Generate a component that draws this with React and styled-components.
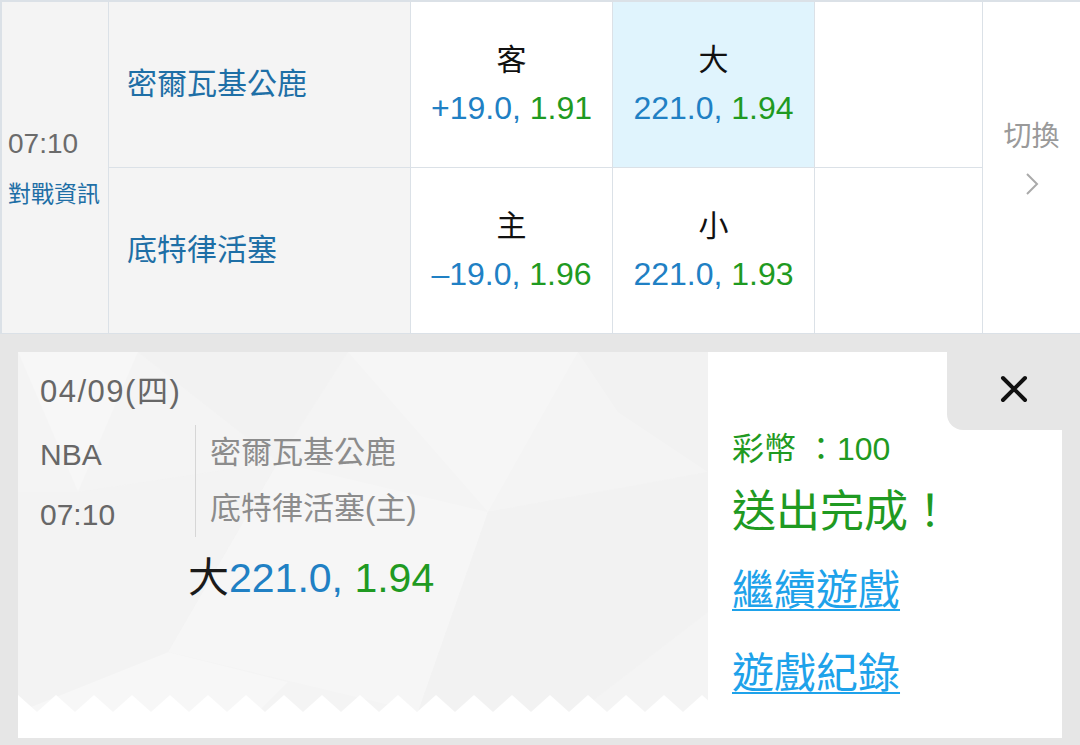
import React from 'react';
import styled, { createGlobalStyle } from 'styled-components';

const GlobalStyle = createGlobalStyle`
  html, body {
    margin: 0;
    padding: 0;
    background: #e6e6e6;
  }
  body {
    font-family: "Liberation Sans", "Noto Sans CJK TC", sans-serif;
    -webkit-font-smoothing: antialiased;
  }
`;

const BLUE = '#2080c4';
const GREEN = '#1f9a22';

const games = [
  { team: '密爾瓦基公鹿', side: '客', spread: '+19.0', spreadOdds: '1.91', ou: '大', total: '221.0', ouOdds: '1.94', picked: true },
  { team: '底特律活塞', side: '主', spread: '–19.0', spreadOdds: '1.96', ou: '小', total: '221.0', ouOdds: '1.93', picked: false },
];

const App = () => {
  return (
    <Page>
      <GlobalStyle />
      <Board>
        <TimeCell>
          <Time>07:10</Time>
          <InfoLink>對戰資訊</InfoLink>
        </TimeCell>
        {games.map((g, i) => (
          <React.Fragment key={g.team}>
            <TeamCell row={i + 1}>{g.team}</TeamCell>
            <OddsCell row={i + 1} col={3}>
              <Label>{g.side}</Label>
              <Odds>
                <Num>{g.spread},</Num> <Price>{g.spreadOdds}</Price>
              </Odds>
            </OddsCell>
            <OddsCell row={i + 1} col={4} active={g.picked}>
              <Label>{g.ou}</Label>
              <Odds>
                <Num>{g.total},</Num> <Price>{g.ouOdds}</Price>
              </Odds>
            </OddsCell>
            <EmptyCell row={i + 1} />
          </React.Fragment>
        ))}
        <SwitchCell>
          <SwitchText>切換</SwitchText>
          <svg width="14" height="24" viewBox="0 0 14 24">
            <polyline points="2,2 12,12 2,22" fill="none" stroke="#aaa" strokeWidth="2" />
          </svg>
        </SwitchCell>
      </Board>

      <Panel>
        <Card>
          <Ticket>
            <Texture viewBox="0 0 690 360" preserveAspectRatio="none">
              <polygon points="0,0 120,0 60,140" fill="#ffffff" opacity="0.25" />
              <polygon points="120,0 330,0 260,110" fill="#ededed" opacity="0.3" />
              <polygon points="330,0 560,0 470,160" fill="#ffffff" opacity="0.2" />
              <polygon points="560,0 690,0 690,120 600,60" fill="#eeeeee" opacity="0.35" />
              <polygon points="0,140 60,140 260,110 150,300 0,360" fill="#f0f0f0" opacity="0.35" />
              <polygon points="260,110 470,160 400,360 150,300" fill="#ffffff" opacity="0.18" />
              <polygon points="470,160 690,120 690,260 560,360 400,360" fill="#ededed" opacity="0.3" />
              <polygon points="0,360 150,300 270,330 240,360" fill="#ffffff" opacity="0.25" />
            </Texture>
            <TicketBody>
              <DateLine>04/09(四)</DateLine>
              <MatchRow>
                <MetaCol>
                  <MetaLine>NBA</MetaLine>
                  <MetaLine>07:10</MetaLine>
                </MetaCol>
                <TeamsCol>
                  <TeamLine>密爾瓦基公鹿</TeamLine>
                  <TeamLine>底特律活塞(主)</TeamLine>
                </TeamsCol>
              </MatchRow>
              <PickLine>
                <PickSide>大</PickSide>
                <Num>221.0,</Num> <Price>1.94</Price>
              </PickLine>
            </TicketBody>
            <Zigzag height="17" width="100%">
              <defs>
                <pattern id="teeth" width="38" height="17" patternUnits="userSpaceOnUse">
                  <polygon points="0,0 19,17 0,17" fill="#fff" />
                  <polygon points="38,0 19,17 38,17" fill="#fff" />
                </pattern>
              </defs>
              <rect width="100%" height="17" fill="url(#teeth)" />
            </Zigzag>
          </Ticket>

          <Result>
            <ResultTop>
              <CloseTab>
                <svg width="28" height="28" viewBox="0 0 28 28">
                  <path d="M3 3 L25 25 M25 3 L3 25" stroke="#111" strokeWidth="4" strokeLinecap="round" />
                </svg>
              </CloseTab>
            </ResultTop>
            <ResultBody>
              <Coins>彩幣 ：100</Coins>
              <Done>送出完成！</Done>
              <ActionLink href="#" gap={21}>繼續遊戲</ActionLink>
              <ActionLink href="#" gap={27}>遊戲紀錄</ActionLink>
            </ResultBody>
          </Result>
        </Card>
      </Panel>
    </Page>
  );
};

export default App;

const Page = styled.div`
  width: 1080px;
  height: 745px;
  overflow: hidden;
  background: #e6e6e6;
`;

const Board = styled.div`
  display: grid;
  grid-template-columns: 106px 301px 201px 201px 167px 1fr;
  grid-template-rows: 165px 165px;
  gap: 1px;
  padding: 2px 0 0 2px;
  background: #dbe1e7;
  border-bottom: 1px solid #dbe1e7;
`;

const TimeCell = styled.div`
  grid-column: 1;
  grid-row: 1 / span 2;
  background: #f4f4f4;
  display: flex;
  flex-direction: column;
  justify-content: center;
  padding-left: 6px;
`;

const Time = styled.div`
  font-size: 28px;
  line-height: 36px;
  color: #6b6b6b;
  margin-bottom: 17px;
`;

const InfoLink = styled.div`
  font-size: 23px;
  line-height: 30px;
  color: #1e6fa6;
`;

const TeamCell = styled.div`
  grid-column: 2;
  grid-row: ${(p) => p.row};
  background: #f4f4f4;
  display: flex;
  align-items: center;
  padding-left: 18px;
  padding-bottom: 8px;
  font-size: 30px;
  color: #1e6fa6;
`;

const OddsCell = styled.div`
  grid-column: ${(p) => p.col};
  grid-row: ${(p) => p.row};
  background: ${(p) => (p.active ? '#e0f4fd' : '#ffffff')};
  display: flex;
  flex-direction: column;
  align-items: center;
  justify-content: center;
`;

const Label = styled.div`
  font-size: 30px;
  line-height: 40px;
  color: #111;
  margin-bottom: 6px;
`;

const Odds = styled.div`
  font-size: 32px;
  line-height: 44px;
  white-space: nowrap;
`;

const Num = styled.span`
  color: ${BLUE};
`;

const Price = styled.span`
  color: ${GREEN};
`;

const EmptyCell = styled.div`
  grid-column: 5;
  grid-row: ${(p) => p.row};
  background: #ffffff;
`;

const SwitchCell = styled.div`
  grid-column: 6;
  grid-row: 1 / span 2;
  background: #ffffff;
  display: flex;
  flex-direction: column;
  align-items: center;
  justify-content: center;
  gap: 17px;
  padding-bottom: 20px;
`;

const SwitchText = styled.div`
  font-size: 28px;
  line-height: 36px;
  color: #9a9a9a;
`;

const Panel = styled.div`
  padding: 18px 18px 7px 18px;
`;

const Card = styled.div`
  display: flex;
  height: 386px;
  background: #ffffff;
`;

const Ticket = styled.div`
  position: relative;
  width: 690px;
  height: 360px;
  background: #f4f4f4;
  display: flex;
  flex-direction: column;
`;

const Texture = styled.svg`
  position: absolute;
  inset: 0;
  width: 100%;
  height: 100%;
  pointer-events: none;
`;

const TicketBody = styled.div`
  position: relative;
  flex: 1;
  padding: 22px 0 0 22px;
`;

const DateLine = styled.div`
  font-size: 31px;
  line-height: 36px;
  letter-spacing: 1.5px;
  color: #676767;
`;

const MatchRow = styled.div`
  display: flex;
  align-items: flex-start;
  margin-top: 15px;
`;

const MetaCol = styled.div`
  width: 155px;
`;

const MetaLine = styled.div`
  font-size: 30px;
  line-height: 60px;
  color: #676767;
`;

const TeamsCol = styled.div`
  border-left: 1px solid #d6d6d6;
  padding-left: 14px;
`;

const TeamLine = styled.div`
  font-size: 31px;
  line-height: 56px;
  color: #8c8c8c;
`;

const PickLine = styled.div`
  margin: 0 0 0 148px;
  padding-top: 8px;
  font-size: 41px;
  line-height: 50px;
  white-space: nowrap;
`;

const PickSide = styled.span`
  color: #1a1a1a;
`;

const Zigzag = styled.svg`
  position: relative;
  display: block;
  flex-shrink: 0;
`;

const Result = styled.div`
  flex: 1;
  display: flex;
  flex-direction: column;
`;

const ResultTop = styled.div`
  display: flex;
  justify-content: flex-end;
`;

const CloseTab = styled.div`
  width: 115px;
  height: 78px;
  background: #e6e6e6;
  border-bottom-left-radius: 16px;
  display: flex;
  align-items: center;
  padding-left: 53px;
  padding-bottom: 4px;
  box-sizing: border-box;
`;

const ResultBody = styled.div`
  padding-left: 24px;
  display: flex;
  flex-direction: column;
  align-items: flex-start;
`;

const Coins = styled.div`
  font-size: 32px;
  line-height: 38px;
  color: ${GREEN};
  white-space: pre;
`;

const Done = styled.div`
  font-size: 44px;
  line-height: 60px;
  margin-top: 14px;
  color: ${GREEN};
`;

const ActionLink = styled.a`
  display: block;
  font-size: 42px;
  line-height: 56px;
  margin-top: ${(p) => p.gap}px;
  color: #1ea2ea;
  text-decoration: underline;
  text-decoration-thickness: 2px;
  text-underline-offset: 4px;
`;
